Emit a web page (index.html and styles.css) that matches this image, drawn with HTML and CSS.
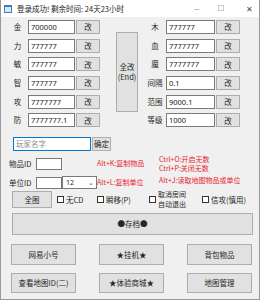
FILE: index.html
```html
<!DOCTYPE html>
<html>
<head>
<meta name="viewport" content="width=device-width, initial-scale=1">
<link rel="stylesheet" href="styles.css">
</head>
<body>

<div class="window">
  <div class="titlebar">
    <span class="app-icon"></span>
    <span class="title">登录成功! 剩余时间: 24天23小时</span>
    <div class="controls">
      <span class="ctl min">&#8212;</span>
      <span class="ctl max"></span>
      <span class="ctl close">&#10005;</span>
    </div>
  </div>

  <div class="client">
    <div class="stats">
      <div class="col left">
        <div class="row"><span class="lbl">金</span><input class="txt" value="700000"><button class="btn small">改</button></div>
        <div class="row"><span class="lbl">力</span><input class="txt" value="777777"><button class="btn small">改</button></div>
        <div class="row"><span class="lbl">敏</span><input class="txt" value="777777"><button class="btn small">改</button></div>
        <div class="row"><span class="lbl">智</span><input class="txt" value="777777"><button class="btn small">改</button></div>
        <div class="row"><span class="lbl">攻</span><input class="txt" value="7777777"><button class="btn small">改</button></div>
        <div class="row"><span class="lbl">防</span><input class="txt" value="7777777.1"><button class="btn small">改</button></div>
      </div>
      <button class="btn all">全改<br>(End)</button>
      <div class="col right">
        <div class="row"><span class="lbl">木</span><input class="txt" value="777777"><button class="btn small">改</button></div>
        <div class="row"><span class="lbl">血</span><input class="txt" value="7777777"><button class="btn small">改</button></div>
        <div class="row"><span class="lbl">魔</span><input class="txt" value="7777777"><button class="btn small">改</button></div>
        <div class="row"><span class="lbl">间隔</span><input class="txt" value="0.1"><button class="btn small">改</button></div>
        <div class="row"><span class="lbl">范围</span><input class="txt" value="9000.1"><button class="btn small">改</button></div>
        <div class="row"><span class="lbl">等级</span><input class="txt" value="1000"><button class="btn small">改</button></div>
      </div>
    </div>

    <div class="name-row">
      <input class="txt name" placeholder="玩家名字">
      <button class="btn ok">确定</button>
    </div>

    <div class="ids">
      <span class="lbl id">物品ID</span>
      <input class="txt idbox">
      <span></span>
      <span class="hot">Alt+K:复制物品</span>
      <div class="keys">
        <span class="hot">Ctrl+O:开启无数</span>
        <span class="hot">Ctrl+P:关闭无数</span>
        <span class="hot last">Alt+J:读取地图物品或单位</span>
      </div>
      <span class="lbl id">单位ID</span>
      <input class="txt idbox">
      <div class="combo"><span>12</span><span class="arrow">&#8964;</span></div>
      <span class="hot">Alt+L:复制单位</span>
    </div>

    <div class="opts">
      <button class="btn map">全图</button>
      <label class="chk w1"><span class="box"></span>无CD</label>
      <label class="chk w2"><span class="box"></span>瞬移(P)</label>
      <label class="chk w3"><span class="box"></span><span class="two">取消房间<br>自动退出</span></label>
      <label class="chk"><span class="box"></span>信攻(慎用)</label>
    </div>

    <button class="btn save">●存档●</button>

    <div class="actions">
      <button class="btn big">网易小号</button>
      <button class="btn big">★挂机★</button>
      <button class="btn big">背包物品</button>
      <button class="btn big">查看地图ID(二)</button>
      <button class="btn big">★体验商城★</button>
      <button class="btn big">地图管理</button>
    </div>
  </div>
</div>

</body>
</html>
```

FILE: styles.css
```css
body {
  margin: 0;
  background-color: #ffffff;
  font-family: "Noto Sans CJK SC", "Noto Sans", sans-serif;
  font-size: 7.5px;
  color: #262626;
}

/* Window frame */
.window {
  box-sizing: border-box;
  width: 260px;
  height: 300px;
  border: 1px solid #9a9a9a;
  border-top: none;
  background-color: #f0f0f0;
  overflow: hidden;
}

.titlebar {
  display: flex;
  align-items: center;
  height: 17px;
  background-color: #ffffff;
}

.app-icon {
  box-sizing: border-box;
  width: 8px;
  height: 8px;
  margin-left: 3px;
  border: 1px solid #3c7bc8;
  border-top-width: 2px;
  background-color: #dce9f7;
}

.title {
  margin-left: 5px;
  line-height: 17px;
  color: #222;
}

.controls {
  display: flex;
  margin-left: auto;
  height: 17px;
}

.ctl {
  width: 24px;
  text-align: center;
  line-height: 17px;
  color: #444;
}

.ctl.min {
  font-size: 6px;
}

.ctl.max {
  box-sizing: border-box;
  width: 6px;
  height: 6px;
  margin: 5px 9px 0 9px;
  border: 1px solid #c8c8c8;
}

.ctl.close {
  width: 20px;
  margin-left: 6px;
  font-size: 8px;
}

/* Form controls */
.txt {
  box-sizing: border-box;
  height: 14px;
  margin: 0;
  padding: 0 2px;
  border: 1px solid #7a7a7a;
  background-color: #ffffff;
  font-family: "Noto Sans", "Noto Sans CJK SC", sans-serif;
  font-size: 7.5px;
  color: #1a1a1a;
  outline: none;
}

.btn {
  box-sizing: border-box;
  margin: 0;
  padding: 0;
  border: 1px solid #adadad;
  background-color: #e1e1e1;
  font-family: "Noto Sans CJK SC", "Noto Sans", sans-serif;
  font-size: 7.5px;
  line-height: 1;
  color: #262626;
}

.client {
  padding-top: 3px;
}

/* Stat rows */
.stats {
  display: flex;
  align-items: flex-start;
}

.col {
  display: flex;
  flex-direction: column;
  gap: 4.7px;
}

.row {
  display: flex;
  align-items: center;
  height: 14px;
}

.lbl {
  line-height: 14px;
  text-align: center;
}

.left {
  margin-left: 8px;
}

.left .lbl {
  width: 17px;
  margin-right: 2px;
}

.left .txt {
  width: 47px;
}

.right {
  margin-left: 7px;
}

.right .lbl {
  width: 20px;
  margin-right: 1px;
}

.right .txt {
  width: 49px;
}

.btn.small {
  width: 24px;
  height: 14px;
  margin-left: 1px;
}

.btn.all {
  width: 22px;
  height: 80px;
  margin-top: 12px;
  margin-left: 16px;
  line-height: 10px;
}

/* Player name */
.name-row {
  display: flex;
  margin: 9.5px 0 0 12px;
}

.txt.name {
  width: 78px;
  border-color: #0078d7;
}

.txt.name::placeholder {
  color: #8a8a8a;
  font-family: "Noto Sans CJK SC", sans-serif;
  font-size: 7.5px;
}

.btn.ok {
  width: 19px;
  height: 14px;
  margin-left: 1px;
}

/* Item / unit ids */
.ids {
  display: grid;
  grid-template-columns: 27px 26px 35px 62px auto;
  grid-template-rows: 12px 12px;
  row-gap: 7px;
  align-items: center;
  margin: 7px 0 0 8px;
}

.lbl.id {
  text-align: left;
  line-height: 12px;
}

.txt.idbox {
  width: 26px;
  height: 12px;
}

.combo {
  box-sizing: border-box;
  display: flex;
  justify-content: space-between;
  align-items: center;
  width: 35px;
  height: 13px;
  padding: 0 2px 0 3px;
  border: 1px solid #7a7a7a;
  background-color: #ffffff;
  font-family: "Noto Sans", sans-serif;
  font-size: 7px;
}

.combo .arrow {
  font-size: 7px;
  line-height: 7px;
  color: #555;
}

.hot {
  color: #e8242e;
  white-space: nowrap;
  font-size: 7px;
  line-height: 9px;
}

.keys {
  grid-column: 5;
  grid-row: 1 / span 2;
  align-self: start;
  display: flex;
  flex-direction: column;
  margin-top: -2.5px;
}

.keys .last {
  margin-top: 3px;
}

/* Options */
.opts {
  display: flex;
  align-items: center;
  margin: 2px 0 0 11px;
  height: 17px;
}

.btn.map {
  width: 40px;
  height: 17px;
  margin-right: 5px;
}

.chk {
  display: flex;
  align-items: center;
  white-space: nowrap;
}

.chk .box {
  box-sizing: border-box;
  width: 7px;
  height: 7px;
  margin-right: 2px;
  border: 1px solid #333;
  background-color: #ffffff;
}

.chk.w1 {
  width: 40px;
}

.chk.w2 {
  width: 52px;
}

.chk.w3 {
  width: 53px;
}

.chk .two {
  font-size: 7px;
  line-height: 10px;
}

.btn.save {
  display: block;
  width: 241px;
  height: 22px;
  margin: 5px 0 0 11px;
}

/* Bottom buttons */
.actions {
  display: grid;
  grid-template-columns: 65px 65px 65px;
  grid-template-rows: 21px 20px;
  column-gap: 23px;
  row-gap: 8px;
  margin: 9px 0 0 10px;
}

.btn.big {
  width: 65px;
}
```
